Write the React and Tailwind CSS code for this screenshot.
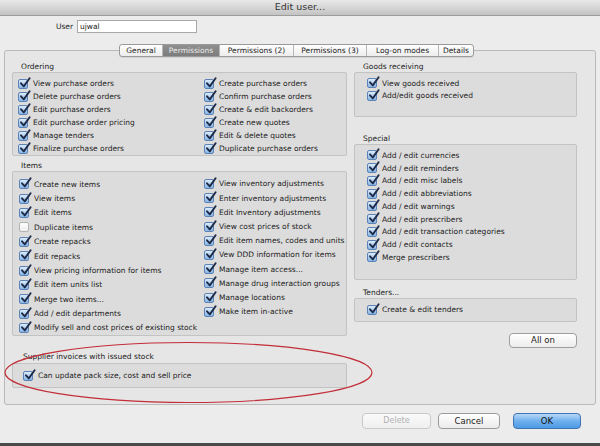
import React from "react";

function Box({ checked = true }) {
  return (
    <span
      className={
        "relative shrink-0 w-[10px] h-[10px] rounded-[2px] border " +
        (checked
          ? "border-[#5d82b5] bg-gradient-to-b from-[#dcebfa] to-[#86b6e6]"
          : "border-[#b5b5b5] bg-gradient-to-b from-[#ffffff] to-[#ececec]")
      }
    >
      {checked && (
        <svg viewBox="0 0 12 12" className="absolute left-[0px] top-[-3px] w-[12px] h-[12px]">
          <path d="M2 6.3 L4.8 9.4 L10.6 1.2" stroke="#1d2b49" strokeWidth="1.9" fill="none" strokeLinecap="round" strokeLinejoin="round" />
        </svg>
      )}
    </span>
  );
}

function Row({ label, checked = true, h = "h-[13px]" }) {
  return (
    <div className={"flex items-center gap-[5px] whitespace-nowrap " + h}>
      <Box checked={checked} />
      <span>{label}</span>
    </div>
  );
}

function Label({ children, cls = "" }) {
  return <div className={"pl-[9px] h-[10px] leading-[10px] text-[#222] " + cls}>{children}</div>;
}

const orderingL = [
  "View purchase orders",
  "Delete purchase orders",
  "Edit purchase orders",
  "Edit purchase order pricing",
  "Manage tenders",
  "Finalize purchase orders",
];
const orderingR = [
  "Create purchase orders",
  "Confirm purchase orders",
  "Create & edit backorders",
  "Create new quotes",
  "Edit & delete quotes",
  "Duplicate purchase orders",
];
const itemsL = [
  ["Create new items", true],
  ["View items", true],
  ["Edit items", true],
  ["Duplicate items", false],
  ["Create repacks", true],
  ["Edit repacks", true],
  ["View pricing information for items", true],
  ["Edit item units list", true],
  ["Merge two items...", true],
  ["Add / edit departments", true],
  ["Modify sell and cost prices of existing stock", true],
];
const itemsR = [
  "View inventory adjustments",
  "Enter inventory adjustments",
  "Edit Inventory adjustments",
  "View cost prices of stock",
  "Edit item names, codes and units",
  "Vew DDD information for items",
  "Manage item access...",
  "Manage drug interaction groups",
  "Manage locations",
  "Make item in-active",
];
const special = [
  "Add / edit currencies",
  "Add / edit reminders",
  "Add / edit misc labels",
  "Add / edit abbreviations",
  "Add / edit warnings",
  "Add / edit prescribers",
  "Add / edit transaction categories",
  "Add / edit contacts",
  "Merge prescribers",
];

const tabs = [
  ["General", "w-[42px]"],
  ["Permissions", "w-[57px]"],
  ["Permissions (2)", "w-[74px]"],
  ["Permissions (3)", "w-[73px]"],
  ["Log-on modes", "w-[72px]"],
  ["Details", "w-[35px]"],
];

const group = "bg-[#dcdcdc] border border-[#c3c3c3] rounded-[2px]";

export default function App() {
  return (
    <div
      className="relative w-[600px] h-[446px] bg-[#ececec] flex flex-col overflow-hidden text-[7.5px] text-[#222]"
      style={{ fontFamily: '"DejaVu Sans", "Liberation Sans", sans-serif' }}
    >
      {/* title bar */}
      <div className="h-[16px] shrink-0 bg-gradient-to-b from-[#e9e9e9] to-[#c3c3c3] border-b border-[#9c9c9c] flex items-center justify-center text-[9.5px] text-[#333]">
        Edit user...
      </div>

      {/* user row */}
      <div className="flex items-center mt-[4px] h-[13px]">
        <div className="w-[73px] text-right pr-[0px] text-[7.5px]">User</div>
        <div className="ml-[4px] w-[120px] h-[13px] bg-white border border-[#a9a9a9] flex items-center pl-[2px] text-[7.5px]">
          ujwal
        </div>
      </div>

      {/* tabs */}
      <div className="relative z-10 mt-[11px] h-[13px] flex pl-[119px]">
        <div className="flex h-[13px] border border-[#9a9a9a] rounded-[3px] overflow-hidden bg-gradient-to-b from-[#ffffff] to-[#ececec] shadow-[0_1px_0_rgba(0,0,0,0.08)]">
          {tabs.map(([t, w], i) => (
            <div
              key={t}
              className={
                "flex items-center justify-center h-full " +
                w +
                (i > 0 ? " border-l border-[#b8b8b8]" : "") +
                (i === 1 ? " bg-gradient-to-b from-[#8f8f8f] to-[#7c7c7c] text-[#e8e8e8]" : " text-[#222]")
              }
            >
              {t}
            </div>
          ))}
        </div>
      </div>

      {/* panel */}
      <div className="mx-[4px] -mt-[7px] h-[355px] border border-[#b9b9b9] rounded-[3px] bg-[#e6e6e6] flex pl-[7px] pt-[11px]">
        {/* left column */}
        <div className="w-[335px] flex flex-col">
          <Label>Ordering</Label>
          <div className={group + " h-[84px] pt-[4px] pl-[5px] grid grid-cols-[186px_1fr]"}>
            <div className="flex flex-col">
              {orderingL.map((t) => (
                <Row key={t} label={t} />
              ))}
            </div>
            <div className="flex flex-col">
              {orderingR.map((t) => (
                <Row key={t} label={t} />
              ))}
            </div>
          </div>
          <Label cls="mt-[5px]">Items</Label>
          <div className={group + " h-[165px] pt-[5px] pl-[6px] grid grid-cols-[185px_1fr]"}>
            <div className="flex flex-col">
              {itemsL.map(([t, c]) => (
                <Row key={t} label={t} checked={c} h="h-[14.4px]" />
              ))}
            </div>
            <div className="flex flex-col">
              {itemsR.map((t) => (
                <Row key={t} label={t} h="h-[14.2px]" />
              ))}
            </div>
          </div>
          <Label cls="mt-[16px] pl-[11px]">Supplier invoices with issued stock</Label>
          <div className={group + " mt-[1px] h-[25px] pl-[10px] flex items-center"}>
            <Row label="Can update pack size, cost and sell price" />
          </div>
        </div>

        {/* right column */}
        <div className="ml-[7px] w-[223px] flex flex-col">
          <Label>Goods receiving</Label>
          <div className={group + " h-[45px] pt-[4px] pl-[12px] flex flex-col"}>
            <Row label="View goods received" h="h-[12.6px]" />
            <Row label="Add/edit goods received" h="h-[12.6px]" />
          </div>
          <Label cls="mt-[17px]">Special</Label>
          <div className={group + " h-[136px] pt-[4px] pl-[12px] flex flex-col"}>
            {special.map((t) => (
              <Row key={t} label={t} h="h-[12.75px]" />
            ))}
          </div>
          <Label cls="mt-[8px]">Tenders...</Label>
          <div className={group + " h-[24px] pl-[12px] flex items-center"}>
            <Row label="Create & edit tenders" />
          </div>
          <div className="flex justify-end mt-[11px]">
            <button className="w-[68px] h-[15px] rounded-[4px] border border-[#9e9e9e] bg-gradient-to-b from-[#ffffff] to-[#ececec] text-[8.5px] text-[#222] flex items-center justify-center">
              All on
            </button>
          </div>
        </div>
      </div>

      {/* bottom buttons */}
      <div className="flex mt-[8px] pl-[362px] gap-[7px]">
        <button className="w-[69px] h-[16px] rounded-[4px] border border-[#c9c9c9] bg-gradient-to-b from-[#fafafa] to-[#efefef] text-[8px] text-[#b0b0b0] flex items-center justify-center">
          Delete
        </button>
        <button className="w-[62px] h-[16px] rounded-[4px] border border-[#9a9a9a] bg-gradient-to-b from-[#ffffff] to-[#ebebeb] text-[8.5px] text-[#222] flex items-center justify-center">
          Cancel
        </button>
        <button className="ml-[6px] w-[68px] h-[16px] rounded-[4px] border border-[#3f73b4] bg-gradient-to-b from-[#b7d8f7] via-[#6fb0ee] to-[#4c9ae6] text-[8.5px] text-[#111] flex items-center justify-center">
          OK
        </button>
      </div>

      <div className="mt-auto h-[3px] bg-[#4a4a4a]" />

      {/* red annotation ellipse */}
      <svg className="absolute left-0 top-0 w-[600px] h-[446px] pointer-events-none" viewBox="0 0 600 446">
        <ellipse cx="188.5" cy="372.5" rx="183.5" ry="30" fill="none" stroke="#c22d38" strokeWidth="1.2" />
      </svg>
    </div>
  );
}
